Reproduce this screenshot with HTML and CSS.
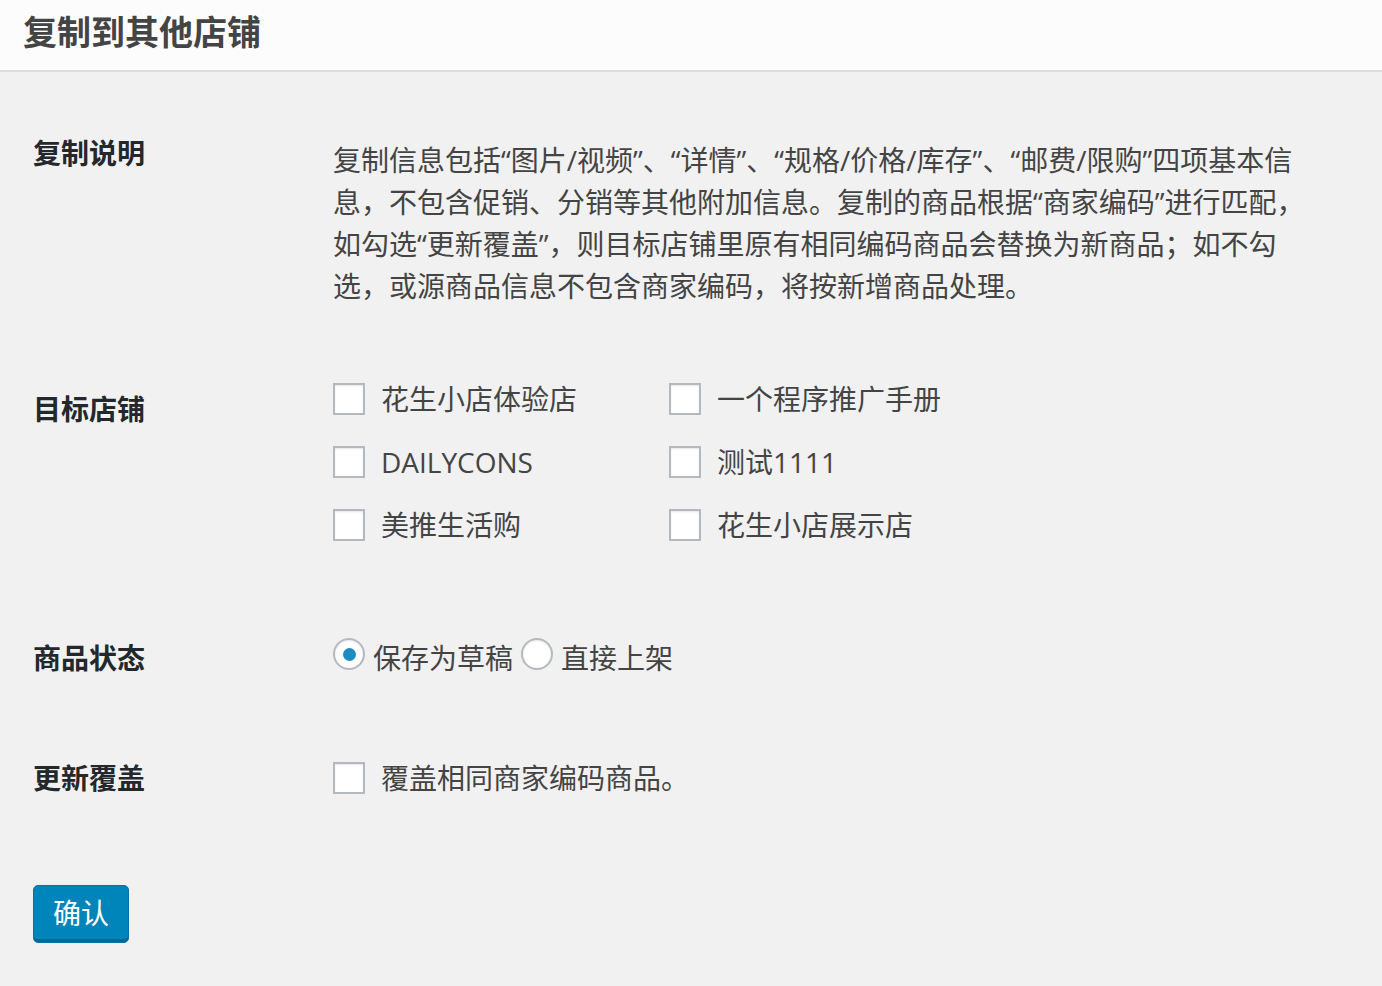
FILE: index.html
```html
<!DOCTYPE html>
<html lang="zh-CN">
<head>
  <meta charset="UTF-8" />
  <meta name="viewport" content="width=device-width, initial-scale=1" />
  <title>复制到其他店铺</title>
  <link rel="stylesheet" href="styles.css">
</head>
<body>
  <header class="page-head">
    <h1>复制到其他店铺</h1>
  </header>

  <form class="copy-form" onsubmit="return false;">
    <div class="row row-desc">
      <div class="row-label">复制说明</div>
      <div class="row-field">
        <p class="desc">复制信息包括“图片/视频”、“详情”、“规格/价格/库存”、“邮费/限购”四项基本信息，不包含促销、分销等其他附加信息。复制的商品根据“商家编码”进行匹配，如勾选“更新覆盖”，则目标店铺里原有相同编码商品会替换为新商品；如不勾选，或源商品信息不包含商家编码，将按新增商品处理。</p>
      </div>
    </div>

    <div class="row row-shops">
      <div class="row-label">目标店铺</div>
      <div class="row-field shop-list">
        <label class="check"><input type="checkbox" name="shop" value="1"><span>花生小店体验店</span></label>
        <label class="check"><input type="checkbox" name="shop" value="2"><span>一个程序推广手册</span></label>
        <label class="check"><input type="checkbox" name="shop" value="3"><span>DAILYCONS</span></label>
        <label class="check"><input type="checkbox" name="shop" value="4"><span>测试1111</span></label>
        <label class="check"><input type="checkbox" name="shop" value="5"><span>美推生活购</span></label>
        <label class="check"><input type="checkbox" name="shop" value="6"><span>花生小店展示店</span></label>
      </div>
    </div>

    <div class="row row-status">
      <div class="row-label">商品状态</div>
      <div class="row-field radio-list">
        <label class="radio"><input type="radio" name="status" value="draft" checked><span>保存为草稿</span></label>
        <label class="radio"><input type="radio" name="status" value="publish"><span>直接上架</span></label>
      </div>
    </div>

    <div class="row row-cover">
      <div class="row-label">更新覆盖</div>
      <div class="row-field">
        <label class="check"><input type="checkbox" name="cover" value="1"><span>覆盖相同商家编码商品。</span></label>
      </div>
    </div>

    <button type="submit" class="btn-primary">确认</button>
  </form>
</body>
</html>
```

FILE: styles.css
```css
/* base */
* {
  box-sizing: border-box;
}
body {
  margin: 0;
  background: #f1f1f1;
  color: #444;
  font-family: "Open Sans", "Noto Sans CJK SC", sans-serif;
  font-size: 28px;
  line-height: 42px;
}

/* header */
.page-head {
  background: #fcfcfc;
  border-bottom: 2px solid #dcdcdc;
  height: 72px;
  padding: 11px 23px 0;
}
.page-head h1 {
  margin: 0;
  font-size: 34px;
  line-height: 42px;
  font-weight: 700;
  color: #444;
}

/* form rows */
.copy-form {
  padding: 60px 33px 40px;
}
.row {
  display: grid;
  grid-template-columns: 300px 1fr;
  align-items: start;
}
.row-label {
  font-weight: 700;
  color: #23282d;
  line-height: 42px;
}
.row-desc .desc {
  margin: 7px 0 0;
  width: 976px;
}
.row-shops {
  margin-top: 71px;
}
.row-shops .row-label {
  padding-top: 10px;
}
.row-status {
  margin-top: 91px;
}
.row-cover {
  margin-top: 78px;
}

/* checkboxes */
.shop-list {
  display: grid;
  grid-template-columns: 336px 336px;
  row-gap: 21px;
}
.check {
  display: flex;
  align-items: center;
  gap: 16px;
  height: 42px;
  cursor: pointer;
}
.check input {
  -webkit-appearance: none;
  appearance: none;
  margin: 0;
  width: 32px;
  height: 32px;
  border: 2px solid #b4b9be;
  background: #fff;
  box-shadow: inset 0 1px 2px rgba(0, 0, 0, 0.1);
  cursor: pointer;
}

/* radios */
.radio-list {
  display: flex;
  align-items: flex-start;
  gap: 8px;
}
.radio {
  display: flex;
  align-items: flex-start;
  gap: 8px;
  cursor: pointer;
}
.radio input {
  -webkit-appearance: none;
  appearance: none;
  margin: 1px 0 0;
  width: 32px;
  height: 32px;
  border: 2px solid #b4b9be;
  border-radius: 50%;
  background: #fff;
  box-shadow: inset 0 1px 2px rgba(0, 0, 0, 0.1);
  display: flex;
  align-items: center;
  justify-content: center;
  cursor: pointer;
}
.radio input:checked::before {
  content: "";
  width: 13px;
  height: 13px;
  border-radius: 50%;
  background: #1e8cbe;
}

/* button */
.btn-primary {
  margin-top: 86px;
  width: 96px;
  height: 58px;
  padding: 0 0 3px;
  background: #0085ba;
  border: 1px solid #0073aa;
  border-radius: 5px;
  box-shadow: inset 0 -3px 0 #006799;
  color: #fff;
  font-family: inherit;
  font-size: 28px;
  line-height: 42px;
  cursor: pointer;
}
.btn-primary:hover {
  background: #008ec2;
}
```
